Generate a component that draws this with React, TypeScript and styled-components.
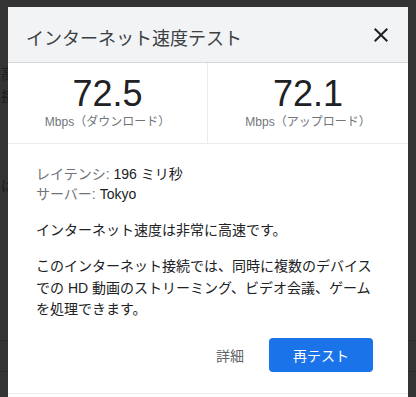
import React from 'react'
import styled, { createGlobalStyle } from 'styled-components'

const GlobalStyle = createGlobalStyle`
  html, body {
    margin: 0;
    padding: 0;
    background: #333333;
    overflow: hidden;
  }
  * {
    box-sizing: border-box;
  }
`

const fontStack = `'Liberation Sans', 'Noto Sans CJK JP', Arial, sans-serif`

const Page = styled.div`
  position: relative;
  width: 416px;
  height: 397px;
  overflow: hidden;
  font-family: ${fontStack};
`

// the page behind the modal, darkened by the scrim
const Backdrop = styled.div`
  display: flex;
  flex-direction: column;
  padding: 63px 0 0 1px;
  color: #1c1c1c;
  font-size: 14px;
  line-height: 22px;
`
const GhostLine = styled.div<{ gap?: number }>`
  margin-top: ${({ gap }) => gap || 0}px;
  white-space: nowrap;
`
const GhostRule = styled.div<{ gap: number }>`
  margin-top: ${({ gap }) => gap}px;
  height: 1px;
  width: 100%;
  background: #2a2a2a;
`

const Dialog = styled.div`
  position: absolute;
  top: 7px;
  left: 8px;
  width: 400px;
  background: #ffffff;
  color: #202124;
`
const Header = styled.div`
  display: flex;
  align-items: center;
  justify-content: space-between;
  padding: 20px 15px 11px 18px;
  background: #f1f3f4;
  border-bottom: 1px solid #d5d7da;
`
const Title = styled.h1`
  margin: 0;
  font-size: 18px;
  font-weight: normal;
  line-height: 24px;
  color: #3c4043;
`
const CloseButton = styled.button`
  display: flex;
  border: none;
  background: none;
  padding: 0;
  margin-top: -9px;
  cursor: pointer;
  color: #202124;
`
const Stats = styled.div`
  display: grid;
  grid-template-columns: 199px 1fr;
  border-bottom: 1px solid #ebebeb;
`
const Stat = styled.div<{ divided?: boolean }>`
  display: flex;
  flex-direction: column;
  align-items: center;
  padding: 11px 0 13px;
  border-left: ${({ divided }) => (divided ? '1px solid #ebebeb' : 'none')};
`
const Value = styled.div`
  font-size: 36px;
  line-height: 40px;
  color: #202124;
`
const Unit = styled.div`
  font-size: 12px;
  line-height: 16px;
  color: #70757a;
  white-space: nowrap;
`
const Body = styled.div`
  padding: 20px 24px 21px 28px;
  font-size: 14px;
`
const Info = styled.div`
  line-height: 20px;
`
const Label = styled.span`
  color: #70757a;
`
const Text = styled.p<{ lh: number }>`
  margin: 16px 0 0;
  line-height: ${({ lh }) => lh}px;
  color: #202124;
`
const Actions = styled.div`
  display: flex;
  justify-content: flex-end;
  align-items: center;
  gap: 12px;
  margin-top: 17px;
  padding-right: 11px;
`
const TextButton = styled.button`
  height: 34px;
  padding: 0 13px;
  border: none;
  background: none;
  font-family: ${fontStack};
  font-size: 14px;
  color: #5f6368;
  cursor: pointer;
`
const PrimaryButton = styled.button`
  width: 104px;
  height: 34px;
  border: none;
  border-radius: 4px;
  background: #1a73e8;
  color: #ffffff;
  font-family: ${fontStack};
  font-size: 14px;
  cursor: pointer;
`
const Footer = styled.div`
  height: 12px;
  border-top: 1px solid #ebebeb;
`

const CloseIcon = () => (
  <svg width="24" height="24" viewBox="0 0 24 24" fill="currentColor">
    <path d="M19 6.41 17.59 5 12 10.59 6.41 5 5 6.41 10.59 12 5 17.59 6.41 19 12 13.41 17.59 19 19 17.59 13.41 12z" />
  </svg>
)

const App: React.FC = () => {
  return (
    <>
      <GlobalStyle />
      <Page>
        <Backdrop>
          <GhostLine>高速</GhostLine>
          <GhostLine>接続</GhostLine>
          <GhostLine gap={68}>は</GhostLine>
          <GhostRule gap={143} />
          <GhostRule gap={30} />
        </Backdrop>
        <Dialog>
          <Header>
            <Title>インターネット速度テスト</Title>
            <CloseButton aria-label="閉じる">
              <CloseIcon />
            </CloseButton>
          </Header>
          <Stats>
            <Stat>
              <Value>72.5</Value>
              <Unit>Mbps（ダウンロード）</Unit>
            </Stat>
            <Stat divided>
              <Value>72.1</Value>
              <Unit>Mbps（アップロード）</Unit>
            </Stat>
          </Stats>
          <Body>
            <Info>
              <div>
                <Label>レイテンシ:</Label> 196 ミリ秒
              </div>
              <div>
                <Label>サーバー:</Label> Tokyo
              </div>
            </Info>
            <Text lh={20}>インターネット速度は非常に高速です。</Text>
            <Text lh={21.5}>
              このインターネット接続では、同時に複数のデバイスでの HD
              動画のストリーミング、ビデオ会議、ゲームを処理できます。
            </Text>
            <Actions>
              <TextButton>詳細</TextButton>
              <PrimaryButton>再テスト</PrimaryButton>
            </Actions>
          </Body>
          <Footer />
        </Dialog>
      </Page>
    </>
  )
}

export default App
